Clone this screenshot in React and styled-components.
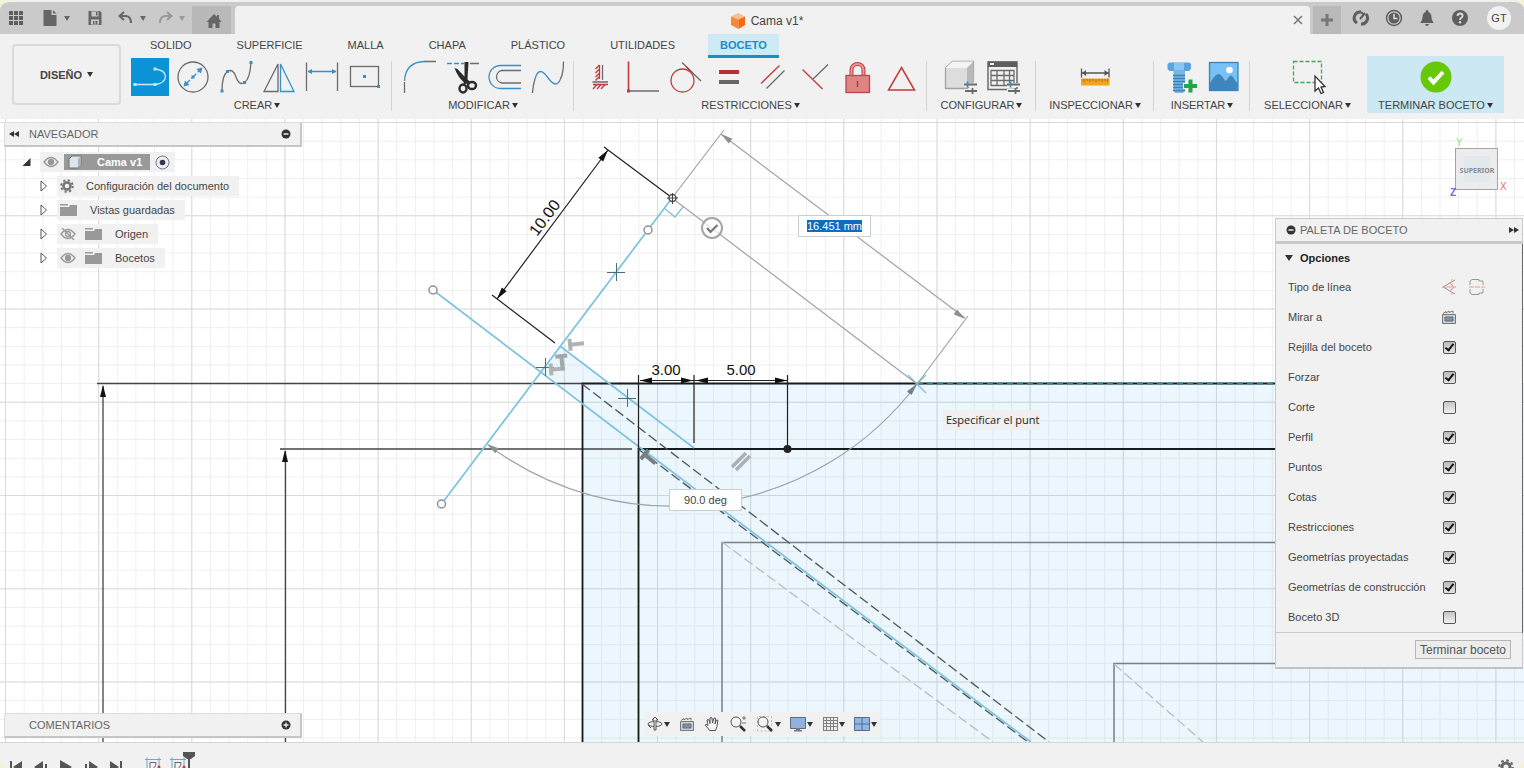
import React, {useEffect, useRef, useState} from 'react';
import styled, {createGlobalStyle} from 'styled-components';

const BLUE = '#3a8fc8';
const GRAY = '#6b6b6b';
const RED = '#c23a3a';
const SKETCH = '#7fc4de';

/* ---------- top bar icons ---------- */

const AppsIcon = () => (
  <svg width="16" height="16" fill="#5e5e5e">
    {[1, 6, 11].map(y => [1, 6, 11].map(x => <rect key={x + '-' + y} x={x} y={y} width="4" height="4"/>))}
  </svg>
);
const FileIcon = () => (
  <svg width="16" height="18" fill="#666"><path d="M1.500 1h8v5h5v11h-13zM11 1l3.500 3.500H11z"/></svg>
);
const SaveIcon = () => (
  <svg width="16" height="16" fill="#666">
    <path fillRule="evenodd" d="M1.500 1h11.500l1.500 1.500v12.500h-13zM4.500 1.500v5h7v-5zM4 9.500v5h8v-5z"/>
    <path d="M9 2h1.500v3.500H9zM6 11h1.500v3H6zM8.500 11h2v3h-2z"/>
  </svg>
);
const UndoIcon = ({color}) => (
  <svg width="16" height="16"><path d="M6 2L1.500 6L6 10M2 6h6q5 0.500 5 7" fill="none" stroke={color} strokeWidth="2"/></svg>
);
const RedoIcon = ({color}) => (
  <svg width="16" height="16"><path d="M10 2l4.500 4L10 10M14 6H8q-5 0.500-5 7" fill="none" stroke={color} strokeWidth="2"/></svg>
);
const HomeIcon = () => (
  <svg width="16" height="16" fill="#666"><path d="M8 1l3 2.700V2h2v3.500L15.500 9H13.500v6H9.500v-4.500h-3V15H2.500V9H0.500z"/></svg>
);
const CubeIcon = () => (
  <svg width="16" height="18">
    <path d="M8 1L15 4.500L8.500 7.500L1 4.500z" fill="#f9c08b"/>
    <path d="M1 4.500l7.500 3V17L1 13z" fill="#f28a3a"/>
    <path d="M15 4.500l-6.500 3V17L15 13z" fill="#f96a10"/>
  </svg>
);
const ExtensionIcon = () => (
  <svg width="18" height="18" fill="none" stroke="#5e5e5e" strokeWidth="3">
    <path d="M5 14a6 6 0 0 1 4-11M14 5a6 6 0 0 1-5 10"/><path d="M8 10l5-6M9 3l2 2" strokeWidth="2"/>
  </svg>
);
const ClockIcon = () => (
  <svg width="18" height="18">
    <circle cx="9" cy="9" r="7.500" fill="none" stroke="#5e5e5e" strokeWidth="1.500"/>
    <circle cx="9" cy="9" r="5.500" fill="#5e5e5e"/><path d="M9 5v4.500h3.500" fill="none" stroke="#ddd" strokeWidth="1.500"/>
  </svg>
);
const BellIcon = () => (
  <svg width="16" height="18" fill="#5e5e5e"><path d="M8 1q1.500 0 1.500 2q3 1 3 5.500q0 3 2 5v.5h-13v-.5q2-2 2-5q0-4.500 3-5.500q0-2 1.500-2zM6 15h4q-.5 2-2 2t-2-2z"/></svg>
);
const HelpIcon = () => (
  <svg width="18" height="18">
    <circle cx="9" cy="9" r="8" fill="#5e5e5e"/>
    <path d="M6.500 7q.3-2.500 2.600-2.500q2.500 0 2.500 2.200q0 1.300-1.300 2Q9 9.500 9 11" fill="none" stroke="#ddd" strokeWidth="1.800"/>
    <circle cx="9" cy="13.300" r="1.200" fill="#ddd"/>
  </svg>
);

/* ---------- ribbon icons, all on a 38px board ---------- */

const Board = ({children}) => (
  <svg width="38" height="38" viewBox="0 0 38 38" fill="none" stroke={GRAY} strokeWidth="1.300">{children}</svg>
);
const Dots = ({at, fill = BLUE}) => at.map(([x, y]) => (
  <rect key={x + '-' + y} x={x - 1.500} y={y - 1.500} width="3" height="3" fill={fill} stroke="none"/>
));
const Sliders = () => (
  <g strokeWidth="1.800">
    <path d="M23 27h13M23 33h13" stroke="#f1f1f1" strokeWidth="4"/>
    <path d="M23 26.500h13M24 33h12"/><path d="M26.500 23.500v6" stroke={BLUE}/><path d="M31.500 30v6"/>
  </g>
);

const icons = {
  line: <Board><path d="M4 26.500h20M24 11q10 1 10.500 7.500Q34 25.500 24 26.500" stroke="#cdeaf9"/><Dots at={[[4, 26.500], [24, 26.500], [24, 11]]} fill="#bfe6fa"/></Board>,
  circle: (
    <Board>
      <circle cx="19" cy="19" r="15"/><path d="M11 27L27 11" stroke={BLUE} strokeDasharray="7 2"/>
      <path d="M28.500 9.500l-1.500 6l-4.500-4.500zM9.500 28.500l1.500-6l4.500 4.500z" fill={BLUE} stroke="none"/><Dots at={[[19, 19]]}/>
    </Board>
  ),
  spline: <Board><path d="M5 33q0-16 5.500-19.500T19 19t8.500 5.500T34 4.500"/><Dots at={[[5, 33], [10.500, 13.500], [27.500, 24.500], [34, 4.500]]}/></Board>,
  mirror: <Board><path d="M18 6v27.500H4z"/><path d="M20.500 6v27.500h13.500z" stroke={BLUE}/></Board>,
  dimension: (
    <Board>
      <path d="M3.500 4.500v28.500M34.500 4.500v28.500"/><path d="M5 13.500h28" stroke={BLUE} strokeWidth="1.600"/>
      <path d="M4.500 13.500l4.500-2.500v5zM33.500 13.500l-4.500-2.500v5z" fill={BLUE} stroke="none"/>
    </Board>
  ),
  rect: <Board><rect x="4.500" y="8.500" width="28" height="20"/><Dots at={[[18.500, 18.500], [32.500, 28.500]]}/></Board>,
  fillet: <Board><path d="M4.500 35V24M24 3.500h12"/><path d="M4.500 23q1-19 20-19.500" stroke={BLUE}/></Board>,
  trim: (
    <Board>
      <path d="M4 5.500h17" stroke={BLUE} strokeDasharray="5 2"/><path d="M27 5.500h9"/>
      <path d="M21.500 4h4l-1 17l-3 1zM11.500 10l3 1l11 12l-3 3q-8-7-11-16z" fill="#2b2b2b" stroke="none"/>
      <ellipse cx="20" cy="30.500" rx="3.500" ry="4" stroke="#2b2b2b" strokeWidth="2.400"/>
      <ellipse cx="29" cy="27.500" rx="4" ry="3.500" stroke="#2b2b2b" strokeWidth="2.400"/>
      <path d="M22 26l1-4l3 3" stroke="#2b2b2b" strokeWidth="3"/>
    </Board>
  ),
  offset: <Board><path d="M35 7.500H14.500a11.500 11.500 0 0 0 0 23H35" stroke={BLUE}/><path d="M35 12.500H16a6.300 6.300 0 0 0 0 12.500H35"/></Board>,
  bend: <Board><path d="M3.500 35q.5-8 2.500-14M31.500 21q3-6 3-17.500"/><path d="M6 21q2-7.500 5.500-7.500c6 0 9 12.500 15 12.500q3 0 5-5" stroke={BLUE}/></Board>,
  horizontal: (
    <Board>
      <path d="M21.500 7v15M11.500 24h15.500"/>
      <g stroke={RED}><path d="M18.500 7v14M14.500 11l4-4M14.500 15l4-4M14.500 19l4-4M14.500 22.500l4-4M12 26.500h15M12 31l4-4.500M16 31l4-4.500M20 31l4-4.500"/></g>
    </Board>
  ),
  coincident: <Board><path d="M4.500 33H35"/><path d="M4.500 3.500V33" stroke={RED} strokeWidth="1.600"/><Dots at={[[4.500, 33]]} fill={RED}/></Board>,
  tangent: <Board><circle cx="15.500" cy="22.500" r="11.500" stroke={RED}/><path d="M15 4.500L34 23"/><path d="M19 8.500l6 6" stroke={RED}/></Board>,
  equal: <Board><rect x="9" y="12" width="20" height="4" fill="#b52f30" stroke="none"/><rect x="9" y="22" width="20" height="4" fill="#666" stroke="none"/></Board>,
  parallel: <Board><path d="M8 25.500L26.500 7.500" stroke={RED}/><path d="M13.500 30.500L31.500 12.500"/></Board>,
  perpendicular: <Board><path d="M6.500 11.500L26.500 31" stroke={RED}/><path d="M17 21L32 6.500"/></Board>,
  lock: (
    <Board>
      <path d="M12.500 17v-5a6 6 0 0 1 12 0v5" stroke={RED} strokeWidth="4"/>
      <path d="M12.500 17v-5a6 6 0 0 1 12 0v5" stroke="#e39a9a" strokeWidth="2"/>
      <rect x="7" y="17.500" width="23.500" height="17" fill="#df8485" stroke="#bd4747"/><path d="M18.500 23v6" stroke="#a33"/>
    </Board>
  ),
  symmetry: <Board><path d="M19.500 9.500L32.500 32h-26z" stroke={RED} strokeWidth="1.500"/></Board>,
  box: (
    <Board>
      <path d="M4.500 10l7-6.500h21v20l-6 7h-22z" fill="#ddd" stroke="#a2a2a2"/>
      <path d="M4.500 10l7-6.500h21l-6.500 6.500z" fill="#f4f4f4" stroke="none"/><path d="M26 10l6.500-6.500v20l-6.500 7z" fill="#b9b9b9" stroke="none"/>
      <Sliders/>
    </Board>
  ),
  table: (
    <Board>
      <rect x="4" y="4" width="29" height="27.500" strokeWidth="1.500"/><rect x="4" y="3.500" width="29" height="5.500" fill="#5f5f5f" stroke="none"/>
      <rect x="6" y="5" width="4" height="2" fill="#eee" stroke="none"/>
      <path d="M7 12.500h23v15H7zM7 17.500h23M7 22.500h23M13 12.500v15M20 12.500v15M25.500 12.500v15"/><Sliders/>
    </Board>
  ),
  measure: (
    <Board>
      <path d="M5.500 10.500v9M33 10.500v9M6 15h26.500" stroke="#555"/><path d="M6 15l4-3v6zM32.500 15l-4-3v6z" fill="#555" stroke="none"/>
      <rect x="5" y="20.500" width="28.500" height="7" fill="#f3a21b" stroke="none"/><path d="M8 21v3M11 21v2M14 21v3M17 21v2M20 21v3M23 21v2M26 21v3M29 21v2M31.500 21v3" stroke="#a76808" strokeWidth="1"/>
    </Board>
  ),
  bolt: (
    <Board>
      <path d="M11.500 12h11.500v21l-2 2h-7.500l-2-2z" fill="#76b6e6" stroke="none"/>
      <path d="M11 17.500h12M11 20.500h12M11 23.500h12M11 26.500h12M11 29.500h12M11 32.500h12" stroke="#3f80b8"/>
      <path d="M5.500 6l2-1.500h20l1.500 1.500v5l-2 2H7.500l-2-2z" fill="#5ba3dc" stroke="none"/><path d="M12 5h10v7.500H12z" fill="#8ac6f2" stroke="none"/>
      <path d="M28.500 20.500v15M21 28h15" stroke="#f1f1f1" strokeWidth="6"/><path d="M28.500 21.500v13M22 28h13" stroke="#27a349" strokeWidth="4"/>
    </Board>
  ),
  image: (
    <Board>
      <rect x="4.500" y="4.500" width="28.500" height="28" fill="#78c1f4" stroke="#3b83b9"/>
      <path d="M5 25q5-9 9-9q3 1 6 7q2-1 4-4q2-3 4 0q2 4 4.500 6v7H5z" fill="#3f86bd" stroke="none"/><circle cx="24.500" cy="12" r="3.300" fill="#fff" stroke="none"/>
    </Board>
  ),
  select: (
    <Board>
      <rect x="4.500" y="3.500" width="28" height="21" stroke="#43a85d" strokeDasharray="4 2"/>
      <path d="M26 18v15l3.500-3l2.500 5.500l2.500-1l-2.500-5.500l4-.5z" fill="#fff" stroke="#333"/>
    </Board>
  ),
  finish: <Board><circle cx="19" cy="19" r="15.500" fill="#66c808" stroke="none"/><path d="M12 19.500l4.500 5L26 14" stroke="#fff" strokeWidth="4"/></Board>
};

/* ---------- data ---------- */

const tabs = ['SOLIDO', 'SUPERFICIE', 'MALLA', 'CHAPA', 'PLÁSTICO', 'UTILIDADES', 'BOCETO'];

const groups = [
  {label: 'CREAR', width: 271, tools: ['line', 'circle', 'spline', 'mirror', 'dimension', 'rect']},
  {label: 'MODIFICAR', width: 182, tools: ['fillet', 'trim', 'offset', 'bend']},
  {label: 'RESTRICCIONES', width: 353, tools: ['horizontal', 'coincident', 'tangent', 'equal', 'parallel', 'perpendicular', 'lock', 'symmetry']},
  {label: 'CONFIGURAR', width: 109, tools: ['box', 'table']},
  {label: 'INSPECCIONAR', width: 118, tools: ['measure']},
  {label: 'INSERTAR', width: 96, tools: ['bolt', 'image']},
  {label: 'SELECCIONAR', width: 115, tools: ['select'], last: true}
];

const options = [
  ['Rejilla del boceto', true],
  ['Forzar', true],
  ['Corte', false],
  ['Perfil', true],
  ['Puntos', true],
  ['Cotas', true],
  ['Restricciones', true],
  ['Geometrías proyectadas', true],
  ['Geometrías de construcción', true],
  ['Boceto 3D', false]
];

/* ---------- small icons of the panels ---------- */

const Fold = ({left}) => (
  <svg width="10" height="8" fill="#333"><path d={left ? 'M0 4L5 1v6zM5 4L10 1v6z' : 'M0 1L5 4L0 7zM5 1L10 4L5 7z'}/></svg>
);
const RoundMark = ({plus}) => (
  <svg width="10" height="10"><circle cx="5" cy="5" r="4.500" fill="#333"/><path d={plus ? 'M2.500 5h5M5 2.500v5' : 'M2.500 5h5'} stroke="#eee" strokeWidth="1.300"/></svg>
);
const EyeIcon = ({off}) => (
  <svg width="16" height="12" fill="none" stroke="#999" strokeWidth="1.300">
    <path d="M1 6q7-9 14 0q-7 9-14 0z"/><circle cx="8" cy="6" r="2.500" fill={off ? 'none' : '#999'}/>{off && <path d="M2 0l12 12"/>}
  </svg>
);
const FolderIcon = () => <svg width="17" height="14" fill="#999"><path d="M0 1h8v1.500H0zM0 4h9l1-2h7v11H0z"/></svg>;
const GearIcon = ({size = 14, color = '#777'}) => (
  <svg width={size} height={size} viewBox="0 0 14 14" fill="none" stroke={color}>
    <circle cx="7" cy="7" r="3.500" strokeWidth="2.600"/><circle cx="7" cy="7" r="5.800" strokeWidth="2" strokeDasharray="2.300 2.255"/>
  </svg>
);
const Twisty = ({open}) => (
  <svg width="9" height="12">{open ? <path d="M8.500 2v8H0.500z" fill="#333"/> : <path d="M2 1v10l5.500-5z" fill="#fff" stroke="#555"/>}</svg>
);
const BodyIcon = () => (
  <svg width="14" height="14"><path d="M1 4l3-3h9v9l-3 3H1z" fill="#dfe4ec" stroke="#6b7078"/><path d="M10 4l3-3v9l-3 3z" fill="#a8b0bd"/></svg>
);
const RadioMark = () => (
  <svg width="15" height="15"><circle cx="7.500" cy="7.500" r="6.500" fill="#eceef6" stroke="#777a88"/><circle cx="7.500" cy="7.500" r="2.800" fill="#333648"/></svg>
);
const ConstructionIcon = () => (
  <svg width="16" height="18" fill="none"><path d="M14 2L2 9l12 7" stroke="#999"/><path d="M1 9h14M11 1v3M11 6v2M11 10v2M11 14v3M8 4l5 5M9 13l4-4" stroke="#e3a29a"/></svg>
);
const CenterlineIcon = () => (
  <svg width="16" height="18" fill="none"><path d="M1 7V3l2-1.500h7V3h4v4M1 11v4l2 1.500h7V15h4v-4" stroke="#999"/><path d="M0 9h16" stroke="#e3a29a" strokeDasharray="5 1"/></svg>
);
const LookIcon = () => (
  <svg width="16" height="14" fill="none"><path d="M1.500 4.500h13v9h-13z" fill="#ccd2da" stroke="#777"/><path d="M4 7h8v4H4z" fill="#8292a5" stroke="#5f6b79"/><path d="M2 3.500l3-2v1.500l3-2v1.500l4-1.500v2.500" stroke="#777"/></svg>
);
const OrbitIcon = () => (
  <svg width="16" height="16" fill="none" stroke="#555"><ellipse cx="8" cy="8" rx="7" ry="2.500"/><path d="M7 14V4H5l3-3l3 3H9v10zM1 9l3 3" fill="#eee"/></svg>
);
const HandIcon = () => (
  <svg width="16" height="16"><path d="M5.500 14.500q-1-2-4.500-5.500q1-1.500 3 .5L3 4q1-1 2 0l1 3.500V2q1-1 2 0l.5 5L10 2q1.500-.5 1.500 1L11 8l1.500-4q1.500-.5 1.300 1q-.5 6-2.300 9.500z" fill="#f5f5f5" stroke="#555"/></svg>
);
const ZoomIcon = ({frame}) => (
  <svg width="18" height="18" fill="none">
    {frame && <path d="M1.500 16V1.500h14V16z" stroke="#b3c4b3" strokeDasharray="2 2"/>}
    <circle cx="7" cy="7" r="5" fill="#f5f5f5" stroke="#555"/><path d="M11 11l5 5" stroke="#333" strokeWidth="2.500"/>
    {!frame && <path d="M15 1v4M13 3h4M13 8h4" stroke="#777"/>}
  </svg>
);
const ScreenIcon = () => (
  <svg width="16" height="16"><path d="M.5 1.500h15v11H.5z" fill="#8fb2de" stroke="#5d6b7c"/><path d="M6 12h4v2h2v1.500H4V14h2z" fill="#778"/></svg>
);
const GridIcon = () => (
  <svg width="16" height="16"><path d="M1 1h14v14H1z" fill="#eee"/><path d="M1 1.500h14M1 4.500h14M1 7.500h14M1 10.500h14M1 14.500h14M1.500 1v14M4.500 1v14M8.500 1v14M11.500 1v14M15.500 1v14" stroke="#808080"/></svg>
);
const ViewsIcon = () => (
  <svg width="16" height="14"><path d="M.5.500h15v13H.5zM8 .5v13M.5 7h15" fill="#92b6e2" stroke="#4f6d93"/></svg>
);

/* ---------- sketch ---------- */

// arrow head with its tip at x, y; angle 0 points right
const Arrow = ({x, y, angle, color = '#111'}) => (
  <path d="M0 0l-12-3v6z" fill={color} transform={`translate(${x} ${y}) rotate(${angle})`}/>
);
const Cross = ({x, y}) => <path d={`M${x - 9} ${y + .5}h18M${x + .5} ${y - 9}v18`} stroke="#4d6b7b"/>;
const Tee = ({x, y, angle, color = '#b0b3b6'}) => (
  <path d="M-6 0h13M-7-6v12" stroke={color} strokeWidth="4" transform={`translate(${x} ${y}) rotate(${angle})`}/>
);

const Sketch = () => (
  <Drawing viewBox="0 119 1524 623" preserveAspectRatio="xMinYMin slice" fill="none">
    <defs>
      <pattern id="minor" x="5" y="122" width="18.630" height="18.650" patternUnits="userSpaceOnUse">
        <path d="M.5 0v18.650M0 .5h18.630" stroke="#efefef" strokeWidth="1"/>
      </pattern>
      <pattern id="major" x="5" y="122" width="93.150" height="93.250" patternUnits="userSpaceOnUse">
        <path d="M.5 0v93.250M0 .5h93.150" stroke="#dadada" strokeWidth="1"/>
      </pattern>
    </defs>
    <rect y="119" width="3000" height="2000" fill="#fff"/>
    <rect y="119" width="3000" height="2000" fill="url(#minor)"/>
    <rect y="119" width="3000" height="2000" fill="url(#major)"/>
    <g fill="#48b0ee" fillOpacity=".11">
      <path d="M582 383h2000v1500H582z"/>
      <path d="M543 372L560 346L609 383H582V401z"/>
    </g>

    <path d="M97 383.500H582M280 449H632M103 386V742M285.500 451V742" stroke="#444" strokeWidth="1.300"/>
    <Arrow x={103} y={385} angle={-90}/>
    <Arrow x={285} y={450} angle={-90}/>
    <path d="M722 742V542.500H1500M1114 742V663.500H1500" stroke="#777f84" strokeWidth="1.500"/>
    <path d="M722 542L993 742M1114 664L1203 742" stroke="#b5bfc5" strokeWidth="1.300" strokeDasharray="10 4"/>
    <path d="M582.500 742V383.500H1500M638.500 742V449H1500" stroke="#161b1e" strokeWidth="1.800"/>
    <path d="M917 383.500H1500" stroke="#2b8a99" strokeWidth="2" strokeDasharray="6 4"/>

    <g stroke="#4c565c" strokeWidth="1.300" strokeDasharray="10 4"><path d="M582 384L1049 742M638 449L1028 742"/></g>
    <path d="M433 290L638 446L1031 742M560 346L694 448" stroke={SKETCH} strokeWidth="1.700"/>
    <path d="M672 198L441.500 504" stroke={SKETCH} strokeWidth="1.800"/>
    <path d="M664 208l11 9l8-10M908 375l18 18M926 375l-18 18" stroke={SKETCH} strokeWidth="1.300"/>

    <g stroke="#222" strokeWidth="1.200">
      <path d="M604 147L671 197M492 295L555 343M608 150L497 299"/>
      <path d="M638.500 375V449M694 375V443M787.500 375V445M640 380.500H787"/>
    </g>
    <Arrow x={608} y={150} angle={-53}/>
    <Arrow x={497} y={299} angle={127}/>
    <Arrow x={640} y={380.500} angle={180}/>
    <Arrow x={693} y={380.500} angle={0}/>
    <Arrow x={696} y={380.500} angle={180}/>
    <Arrow x={787} y={380.500} angle={0}/>
    <circle cx="787.500" cy="449" r="4" fill="#222"/>

    <g stroke="#a0a3a5" strokeWidth="1.200">
      <path d="M672 198L724 130M672 198L917 384M721 134L965 318M917 384L968 316"/>
      <path d="M488 445A307 307 0 0 0 917 384"/>
    </g>
    <Arrow x={721} y={134} angle={217} color="#8d8f91"/>
    <Arrow x={965} y={319} angle={37} color="#8d8f91"/>
    <Arrow x={487} y={444} angle={214} color="#8d8f91"/>
    <Arrow x={917} y={384} angle={-50} color="#70818a"/>
    <circle cx="712" cy="228" r="10" fill="#fff" fillOpacity=".7" stroke="#a5a5a5" strokeWidth="2"/>
    <path d="M707 228l3.500 4l7-7" stroke="#777" strokeWidth="2.200"/>

    <g stroke="#8c9296" strokeWidth="1.500" fill="#fff">
      <circle cx="433" cy="290" r="4"/><circle cx="648" cy="230" r="4"/><circle cx="441.500" cy="504" r="4"/>
      <circle cx="672.500" cy="198" r="3.500" stroke="#555"/>
    </g>
    <path d="M667 198h11M672.500 193v11" stroke="#444"/>
    <Cross x={616} y={272}/>
    <Cross x={545} y={367}/>
    <Cross x={627} y={398}/>
    <Tee x={577} y={344} angle={-6}/>
    <Tee x={558} y={369} angle={-4}/>
    <Tee x={562} y={363} angle={84} color="#a2a7ab"/>
    <Tee x={650} y={459} angle={40} color="#777f85"/>
    <path d="M732 467l14-14M736 470l14-14" stroke="#a9b1b6" strokeWidth="3.500"/>
    <g fill="#111" fontSize="15" textAnchor="middle">
      <text x="666" y="375">3.00</text>
      <text x="741" y="375">5.00</text>
      <text fontSize="16" transform="translate(549 221) rotate(-53)">10.00</text>
    </g>
  </Drawing>
);

const ViewCube = () => (
  <Cube>
    <svg width="60" height="64" viewBox="1449 134 60 64">
      <text x="1456" y="146" fill="#8fe08f" fontSize="10">Y</text>
      <rect x="1455.500" y="148.500" width="42" height="41" fill="#ececee" stroke="#a5a5a5"/>
      <rect x="1464" y="156" width="26" height="26" fill="#e3e8ec"/>
      <text x="1477" y="173" fill="#878d94" fontSize="7" fontWeight="bold" fontFamily="Noto Sans, sans-serif" textAnchor="middle">SUPERIOR</text>
      <text x="1450" y="196" fill="#6d6de0" fontSize="10" fontWeight="bold">Z</text>
      <text x="1500" y="190" fill="#e06d6d" fontSize="10">X</text>
    </svg>
  </Cube>
);

/* ---------- page parts ---------- */

const TopBar = () => (
  <Bar>
    <QuickTools>
      <BarButton $w={32} aria-label="Aplicaciones"><AppsIcon/></BarButton>
      <BarButton $w={44} aria-label="Archivo"><FileIcon/><Caret $color="#666"/></BarButton>
      <BarButton $w={32} aria-label="Guardar"><SaveIcon/></BarButton>
      <BarButton $w={38} aria-label="Deshacer"><UndoIcon color="#666"/><Caret $color="#666"/></BarButton>
      <BarButton $w={38} aria-label="Rehacer"><RedoIcon color="#999"/><Caret $color="#999"/></BarButton>
    </QuickTools>
    <HomeTab aria-label="Inicio"><HomeIcon/></HomeTab>
    <DocumentTab>
      <DocumentName><CubeIcon/>Cama v1*</DocumentName>
      <CloseButton aria-label="Cerrar">
        <svg width="10" height="10"><path d="M1 1l8 8M9 1l-8 8" stroke="#777" strokeWidth="1.500"/></svg>
      </CloseButton>
    </DocumentTab>
    <NewTab aria-label="Nuevo"><svg width="14" height="14"><path d="M7 1v12M1 7h12" stroke="#777" strokeWidth="3"/></svg></NewTab>
    <Account>
      <BarButton $w={33} aria-label="Extensiones"><ExtensionIcon/></BarButton>
      <BarButton $w={33} aria-label="Estado"><ClockIcon/></BarButton>
      <BarButton $w={33} aria-label="Avisos"><BellIcon/></BarButton>
      <BarButton $w={33} aria-label="Ayuda"><HelpIcon/></BarButton>
      <Avatar>GT</Avatar>
    </Account>
  </Bar>
);

const Ribbon = () => (
  <RibbonBox>
    <Workspace>DISEÑO<Caret/></Workspace>
    <RibbonMain>
      <TabRow>
        {tabs.map(tab => <Tab key={tab} $active={tab === 'BOCETO'}>{tab}</Tab>)}
      </TabRow>
      <GroupRow>
        {groups.map(group => (
          <Group key={group.label} $w={group.width} $last={group.last}>
            <Tools>
              {group.tools.map(tool => <Tool key={tool} $active={tool === 'line'} aria-label={tool}>{icons[tool]}</Tool>)}
            </Tools>
            <GroupLabel>{group.label}<Caret/></GroupLabel>
          </Group>
        ))}
        <Finish>
          {icons.finish}
          <GroupLabel as="span">TERMINAR BOCETO<Caret/></GroupLabel>
        </Finish>
      </GroupRow>
    </RibbonMain>
  </RibbonBox>
);

const Browser = () => (
  <BrowserPanel>
    <PanelHeader>
      <Fold left/>
      <PanelTitle>NAVEGADOR</PanelTitle>
      <RoundMark/>
    </PanelHeader>
    <Tree>
      <TreeRow $indent={18}>
        <Twisty open/>
        <TreeItem $gap={5} $end={5}>
          <EyeIcon/>
          <RootName><BodyIcon/><span>Cama v1</span></RootName>
          <RadioMark/>
        </TreeItem>
      </TreeRow>
      <TreeRow $indent={35}><Twisty/><TreeItem $gap={12}><GearIcon/>Configuración del documento</TreeItem></TreeRow>
      <TreeRow $indent={35}><Twisty/><TreeItem $gap={13}><FolderIcon/>Vistas guardadas</TreeItem></TreeRow>
      <TreeRow $indent={35}><Twisty/><TreeItem $gap={9}><EyeIcon off/><FolderIcon/><Leaf>Origen</Leaf></TreeItem></TreeRow>
      <TreeRow $indent={35}><Twisty/><TreeItem $gap={9}><EyeIcon/><FolderIcon/><Leaf>Bocetos</Leaf></TreeItem></TreeRow>
    </Tree>
  </BrowserPanel>
);

const Palette = () => {
  const [values, setValues] = useState(options.map(o => o[1]));
  const toggle = i => setValues(values.map((v, j) => (j === i ? !v : v)));
  return (
    <PalettePanel>
      <PaletteHeader><RoundMark/><span>PALETA DE BOCETO</span><Fold/></PaletteHeader>
      <PaletteBody>
        <Section><Caret $size={4}/>Opciones</Section>
        <OptionRow>
          <span>Tipo de línea</span>
          <IconPair>
            <PlainButton aria-label="Construcción"><ConstructionIcon/></PlainButton>
            <PlainButton aria-label="Línea de centro"><CenterlineIcon/></PlainButton>
          </IconPair>
        </OptionRow>
        <OptionRow><span>Mirar a</span><PlainButton aria-label="Mirar a"><LookIcon/></PlainButton></OptionRow>
        {options.map(([name], i) => (
          <OptionRow as="label" key={name}>
            <span>{name}</span>
            <Check type="checkbox" checked={values[i]} onChange={() => toggle(i)}/>
          </OptionRow>
        ))}
      </PaletteBody>
      <PaletteFooter><EndButton>Terminar boceto</EndButton></PaletteFooter>
    </PalettePanel>
  );
};

const NavigationBar = () => (
  <NavBar>
    <NavButton aria-label="Orbitar"><OrbitIcon/><Caret/></NavButton>
    <NavButton aria-label="Mirar"><LookIcon/></NavButton>
    <NavButton aria-label="Encuadre"><HandIcon/></NavButton>
    <NavButton aria-label="Zoom"><ZoomIcon/></NavButton>
    <NavButton aria-label="Ajustar"><ZoomIcon frame/><Caret/></NavButton>
    <NavButton aria-label="Visualización"><ScreenIcon/><Caret/></NavButton>
    <NavButton aria-label="Rejilla"><GridIcon/><Caret/></NavButton>
    <NavButton aria-label="Vistas"><ViewsIcon/><Caret/></NavButton>
  </NavBar>
);

const playback = [
  ['Inicio', 'M2 2v12h2V2zM14 2v12L5 8z'],
  ['Anterior', 'M10 2v12L1 8zM12 5v6h2V5z'],
  ['Reproducir', 'M2 1v14l12-7z'],
  ['Siguiente', 'M6 2v12l9-6zM2 5v6h2V5z'],
  ['Final', 'M12 2v12h2V2zM2 2v12l9-6z']
];

const Timeline = () => (
  <Foot>
    {playback.map(([name, d]) => (
      <FootButton key={name} aria-label={name}><svg width="16" height="16" fill="#555"><path d={d}/></svg></FootButton>
    ))}
    <Features>
      {[0, 1].map(i => (
        <svg key={i} width="18" height="16" fill="none">
          <path d="M1 2.500h16M3 .5v15M15 .5v15" stroke="#6aa9c9"/><path d="M6 5.500h6q0 6-6 7z" stroke="#667"/><circle cx="15" cy="10" r="1.500" fill="#d33"/>
        </svg>
      ))}
    </Features>
    <Marker><svg width="14" height="20"><path d="M1 1h12v4l-4 3H5L1 5z" fill="#555"/><path d="M7 8v12" stroke="#555" strokeWidth="2"/></svg></Marker>
    <FootGear aria-label="Ajustes"><GearIcon size={16} color="#666"/></FootGear>
  </Foot>
);

const App = () => {
  const length = useRef(null);
  useEffect(() => {
    length.current.focus();
    length.current.select();
  }, []);
  return (
    <Shell>
      <Global/>
      <TopBar/>
      <Ribbon/>
      <Stage>
        <Sketch/>
        <ValueBox ref={length} $x={798} $y={96} defaultValue="16.451 mm" aria-label="Longitud"/>
        <ValueBox $x={669} $y={370} defaultValue="90.0 deg" aria-label="Ángulo"/>
        <Hint>Especificar el punt</Hint>
        <ViewCube/>
        <Browser/>
        <Palette/>
        <Comments>
          <PanelTitle>COMENTARIOS</PanelTitle>
          <RoundMark plus/>
        </Comments>
        <NavigationBar/>
      </Stage>
      <Timeline/>
    </Shell>
  );
};

const Global = createGlobalStyle`
  *, *::before, *::after { box-sizing: border-box; }
  body {
    margin: 0;
    background: #f5f1d3;
    color: #444;
    font: 11px/16px "Liberation Sans", Arial, sans-serif;
  }
  button, input { font: inherit; color: inherit; }
  svg { flex: none; display: block; }
`;
const Shell = styled.div`
  display: flex;
  flex-direction: column;
  height: 100vh;
  overflow: hidden;
  border-top: 2px solid #f1f1ec;
  border-radius: 10px;
  background: #f1f1f1;
`;
const PlainButton = styled.button`
  display: flex;
  align-items: center;
  justify-content: center;
  padding: 0;
  border: 0;
  background: none;
`;
const Caret = styled.i`
  flex: none;
  width: 0;
  height: 0;
  border: ${p => p.$size || 3}px solid transparent;
  border-top: ${p => (p.$size || 3) + 2}px solid ${p => p.$color || '#333'};
  border-bottom: 0;
`;
const Bar = styled.header`
  display: flex;
  height: 32px;
  padding-top: 4px;
  background: #cacaca;
`;
const QuickTools = styled.div`
  display: flex;
  align-items: center;
  justify-content: space-between;
  width: 192px;
  padding: 0 2px 4px 0;
`;
const BarButton = styled(PlainButton)`
  gap: 6px;
  width: ${p => p.$w}px;
`;
const HomeTab = styled(PlainButton)`
  width: 39px;
  padding: 2px 0 0 4px;
  background: #b9b9b9;
`;
const DocumentTab = styled.div`
  flex: 1;
  display: flex;
  align-items: center;
  margin-left: 4px;
  border-radius: 4px 4px 0 0;
  background: #f1f1f1;
`;
const DocumentName = styled.span`
  flex: 1;
  display: flex;
  align-items: center;
  justify-content: center;
  gap: 5px;
  padding: 2px 0 0 12px;
  font-size: 12px;
`;
const CloseButton = styled(PlainButton)`
  width: 24px;
`;
const NewTab = styled(PlainButton)`
  width: 28px;
  margin-left: 3px;
  background: #b9b9b9;
`;
const Account = styled.div`
  display: flex;
  align-items: center;
  width: 183px;
  padding: 0 0 4px 3px;
`;
const Avatar = styled(PlainButton)`
  width: 24px;
  height: 24px;
  margin-left: 11px;
  border-radius: 50%;
  background: #f1f1f1;
`;
const RibbonBox = styled.nav`
  display: flex;
  height: 85px;
  padding-left: 12px;
`;
const Workspace = styled(PlainButton)`
  gap: 5px;
  width: 109px;
  height: 61px;
  margin-top: 10px;
  border: 2px solid #dadada;
  border-radius: 4px;
  font-weight: bold;
`;
const RibbonMain = styled.div`
  flex: 1;
`;
const TabRow = styled.div`
  display: flex;
  gap: 21px;
  height: 24px;
  padding-left: 17px;
`;
const Tab = styled.button`
  padding: 0 12px;
  border: 0;
  border-bottom: 3px solid ${p => (p.$active ? '#1c8cc4' : 'transparent')};
  background: ${p => (p.$active ? '#cdeaf5' : 'none')};
  color: ${p => (p.$active ? '#1c8cc4' : '#444')};
  font-weight: ${p => (p.$active ? 'bold' : 'normal')};
`;
const GroupRow = styled.div`
  display: flex;
`;
const Group = styled.section`
  position: relative;
  width: ${p => p.$w}px;
  display: flex;
  flex-direction: column;
  align-items: center;

  &:first-child { padding-left: 1px; }

  &::after {
    content: "";
    display: ${p => (p.$last ? 'none' : 'block')};
    position: absolute;
    top: 3px;
    right: 0;
    width: 1px;
    height: 50px;
    background: #d3d3d3;
  }
`;
const Tools = styled.div`
  display: flex;
  gap: 5px;
  height: 39px;
`;
const Tool = styled(PlainButton)`
  width: 38px;
  height: 38px;
  background: ${p => (p.$active ? '#0b93d6' : 'none')};
`;
const GroupLabel = styled.button`
  display: flex;
  align-items: center;
  gap: 2px;
  padding: 0;
  border: 0;
  background: none;
  white-space: nowrap;
`;
const Finish = styled.button`
  display: flex;
  flex-direction: column;
  align-items: center;
  gap: 1px;
  width: 137px;
  height: 57px;
  margin: -2px 0 0 2px;
  padding: 2px 0 0;
  border: 0;
  background: #cbe8f3;
`;
const Stage = styled.main`
  position: relative;
  flex: 1;
  min-height: 0;
  overflow: hidden;
`;
const Drawing = styled.svg`
  width: 100%;
  height: 100%;
`;
const ValueBox = styled.input`
  position: absolute;
  left: ${p => p.$x}px;
  top: ${p => p.$y}px;
  width: 73px;
  height: 22px;
  padding: 0 7px;
  border: 1px solid #c9ced2;
  outline: 0;
  background: #fff;
  text-align: center;

  &::selection { background: #0f6cc0; color: #fff; }
`;
const Hint = styled.div`
  position: absolute;
  left: 943px;
  top: 291px;
  width: 97px;
  padding: 2px 3px;
  overflow: hidden;
  white-space: nowrap;
  background: #f0f0f0;
  color: #222;
  font-family: "Open Sans", sans-serif;
`;
const Cube = styled.div`
  position: absolute;
  top: 15px;
  right: 15px;
`;
const BrowserPanel = styled.aside`
  position: absolute;
  top: 3px;
  left: 4px;
  width: 298px;
`;
const PanelHeader = styled.header`
  display: flex;
  align-items: center;
  height: 25px;
  padding: 0 9px 0 4px;
  border: 1px solid #dcdcdc;
  border-width: 1px 2px 2px 1px;
  border-color: #dcdcdc #c6c6c6 #c6c6c6 #dcdcdc;
  background: #f1f1f1;
`;
const PanelTitle = styled.span`
  flex: 1;
  padding-left: 10px;
  color: #666;
`;
const Comments = styled(PanelHeader)`
  position: absolute;
  left: 4px;
  bottom: 4px;
  width: 298px;
  padding-left: 14px;
`;
const Tree = styled.div`
  padding-top: 3px;
`;
const TreeRow = styled.div`
  display: flex;
  align-items: center;
  gap: 9px;
  height: 24px;
  padding-left: ${p => p.$indent}px;
`;
const TreeItem = styled.div`
  display: flex;
  align-items: center;
  gap: ${p => p.$gap}px;
  height: 20px;
  padding: 0 ${p => p.$end || 10}px 0 3px;
  background: #f1f1f1;
`;
const RootName = styled.b`
  display: flex;
  align-items: center;
  height: 16px;
  padding: 0 8px 0 4px;
  gap: 15px;
  background: #999;
  color: #fff;
`;
const Leaf = styled.span`
  padding-left: 4px;
`;
const PalettePanel = styled.aside`
  position: absolute;
  top: 99px;
  right: 1px;
  width: 248px;
  border: 1px solid #c9c9c9;
  border-bottom: 2px solid #c2c2c2;
  background: #f1f1f1;
`;
const PaletteHeader = styled.header`
  display: flex;
  align-items: center;
  gap: 4px;
  height: 25px;
  padding: 0 3px 0 10px;
  border-bottom: 3px solid #c9c9c9;
  color: #666;

  span { flex: 1; }
`;
const PaletteBody = styled.div`
  border-bottom: 1px solid #c9c9c9;
  box-shadow: 1px 0 0 #666;
`;
const Section = styled.h2`
  display: flex;
  align-items: center;
  gap: 7px;
  margin: 0;
  padding-left: 9px;
  height: 28px;
  font-size: 11px;
  color: #222;
`;
const OptionRow = styled.div`
  display: grid;
  grid-template-columns: 153px auto;
  align-items: center;
  justify-content: start;
  height: 30px;
  padding-left: 12px;
`;
const IconPair = styled.div`
  display: flex;
  gap: 12px;
`;
const Check = styled.input`
  appearance: none;
  display: flex;
  justify-content: center;
  width: 13px;
  height: 13px;
  margin: 0 0 0 2px;
  border: 1px solid #555;
  border-radius: 2px;
  background: linear-gradient(#c4c4c4, #f1f1f1);

  &:checked { background: linear-gradient(#bbb, #e4e4e4); }

  &:checked::before {
    content: "";
    width: 5px;
    height: 9px;
    border: solid #111;
    border-width: 0 2px 2px 0;
    transform: rotate(38deg);
  }
`;
const PaletteFooter = styled.footer`
  display: flex;
  justify-content: flex-end;
  padding: 7px 11px 8px;
`;
const EndButton = styled.button`
  height: 19px;
  padding: 0 4px;
  border: 1px solid #b5b5b5;
  background: #ececec;
  color: #555;
  font-size: 12px;
  line-height: 16px;
`;
const NavBar = styled.div`
  position: absolute;
  left: 50%;
  bottom: 6px;
  display: flex;
  align-items: center;
  gap: 9px;
  height: 24px;
  padding: 0 3px;
  background: #f1f1f1;
  transform: translateX(-50%);
`;
const NavButton = styled(PlainButton)`
  gap: 1px;
`;
const Foot = styled.footer`
  display: flex;
  align-items: flex-start;
  gap: 9px;
  height: 26px;
  padding: 16px 10px 0 8px;
  overflow: hidden;
  border-top: 1px solid #d5d5d5;
`;
const FootButton = styled(PlainButton)`
  width: 16px;
`;
const Features = styled.div`
  display: flex;
  gap: 7px;
  margin: -2px 0 0 11px;
`;
const Marker = styled.div`
  margin: -8px 0 0 -14px;
`;
const FootGear = styled(PlainButton)`
  margin-left: auto;
`;

export default App;
